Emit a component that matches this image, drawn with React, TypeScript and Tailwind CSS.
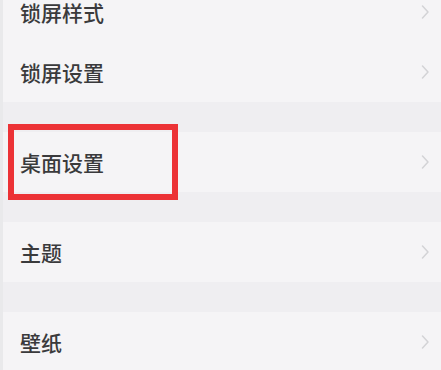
import React from "react";

function Chevron() {
  return (
    <svg width="10" height="16" viewBox="0 0 10 16" className="shrink-0">
      <path d="M2.5 2 L8 8 L2.5 14" fill="none" stroke="#d3d3d6" strokeWidth="1.5" strokeLinecap="round" strokeLinejoin="round" />
    </svg>
  );
}

function Row({ label, boxed }: { label: string; boxed?: boolean }) {
  return (
    <div className="relative flex h-[60px] items-center justify-between pl-[17px] pr-[11px]">
      <span className="text-[21px] font-medium leading-none text-[#3a3a3c]">{label}</span>
      <Chevron />
      {boxed && (
        <div className="absolute left-[5px] top-[-8px] h-[76px] w-[170px] border-[6px] border-[#ec3236]" />
      )}
    </div>
  );
}

function Band() {
  return <div className="h-[30px] bg-[#efeef1]" />;
}

export default function App() {
  return (
    <div
      className="h-[370px] w-[441px] overflow-hidden bg-[#f5f4f6]"
      style={{ fontFamily: '"Noto Sans CJK SC", "Noto Sans", sans-serif' }}
    >
      <div className="-mt-[18px] border-l-[3px] border-[#e9e9eb]">
        <Row label="锁屏样式" />
        <Row label="锁屏设置" />
        <Band />
        <Row label="桌面设置" boxed />
        <Band />
        <Row label="主题" />
        <Band />
        <Row label="壁纸" />
      </div>
    </div>
  );
}
